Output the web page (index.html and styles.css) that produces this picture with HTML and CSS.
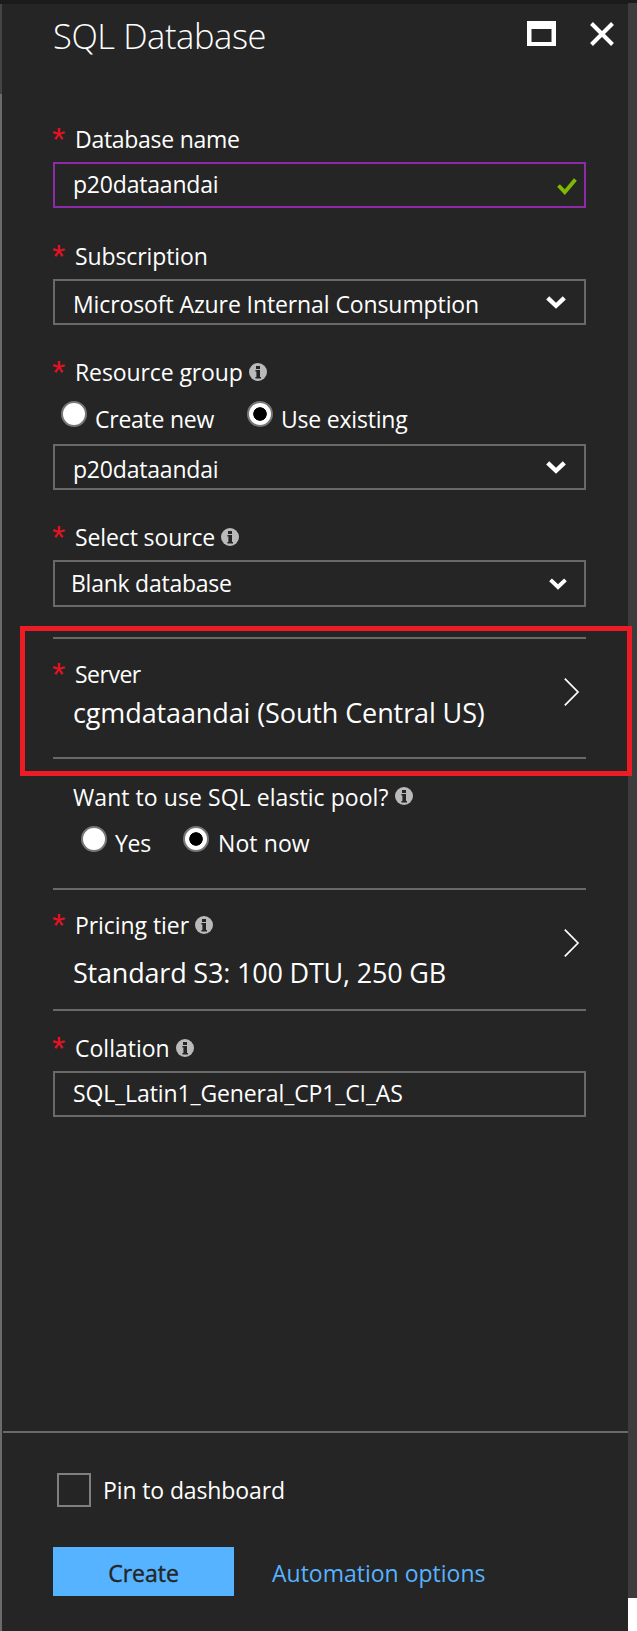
FILE: index.html
```html
<!DOCTYPE html>
<html lang="en">
<head>
<meta charset="utf-8">
<title>SQL Database</title>
<link rel="stylesheet" href="styles.css">
</head>
<body>
<svg class="defs" aria-hidden="true">
  <symbol id="info" viewBox="0 0 18 18"><circle cx="9" cy="9" r="9" fill="#bababa"/><path d="M7 3h4v3H7zM6.400 7H11v7h1v1.400H6.400V14H7.400V8.400h-1z" fill="#252525"/></symbol>
  <symbol id="down" viewBox="0 0 20 13"><path d="M1.700 1.900 10 9.800l8.300-7.900" fill="none" stroke="#fff" stroke-width="4.400"/></symbol>
  <symbol id="next" viewBox="0 0 16 28"><path d="M.8.700 14 14 .8 27.300" fill="none" stroke="#fff" stroke-width="1.700"/></symbol>
</svg>
<div class="topbar"></div>
<div class="frame">
  <div class="edge"><div class="edge-top"></div></div>
  <div class="blade">
    <header class="header">
      <h1 class="title">SQL Database</h1>
      <svg class="maximize" viewBox="0 0 29 25"><path d="M0 0h29v25H0zM4.500 8v13h20V8z" fill="#fff" fill-rule="evenodd"/></svg>
      <svg class="close" viewBox="0 0 24 24"><path d="m1.500 1.500 21 21M22.500 1.500l-21 21" stroke="#fff" stroke-width="4"/></svg>
    </header>

    <main class="form">
      <div class="label"><span class="star">*</span><span class="t-name">Database name</span></div>
      <div class="box box-active"><span class="t-value">p20dataandai</span>
        <svg class="check" viewBox="0 0 20 17"><path d="m1.500 7.500 6.300 6.600L18.400 1.500" fill="none" stroke="#7fba00" stroke-width="3.800"/></svg></div>

      <div class="label gap-wide"><span class="star">*</span><span class="t-tight">Subscription</span></div>
      <div class="box box-select"><span class="t-tight">Microsoft Azure Internal Consumption</span><svg class="down"><use href="#down"/></svg></div>

      <div class="label gap"><span class="star">*</span><span class="t-tight">Resource group</span><svg class="info"><use href="#info"/></svg></div>
      <div class="radios">
        <span class="radio"></span><span class="radio-text t-new">Create new</span>
        <span class="radio radio-on"></span><span class="radio-text t-existing">Use existing</span>
      </div>
      <div class="box box-select box-after-radios"><span class="t-value">p20dataandai</span><svg class="down"><use href="#down"/></svg></div>

      <div class="label gap"><span class="star">*</span><span class="t-source">Select source</span><svg class="info"><use href="#info"/></svg></div>
      <div class="box box-source"><span class="t-blank">Blank database</span><svg class="down down-small"><use href="#down"/></svg></div>

      <section class="picker server">
        <div class="picker-main">
          <div class="label"><span class="star">*</span><span class="t-server">Server</span></div>
          <div class="picked">cgmdataandai (South Central US)</div>
        </div>
        <svg class="next"><use href="#next"/></svg>
        <div class="highlight"></div>
      </section>

      <div class="pool">
        <div class="label"><span class="t-pool">Want to use SQL elastic pool?</span><svg class="info info-pool"><use href="#info"/></svg></div>
        <div class="radios">
          <span class="radio"></span><span class="radio-text t-yes">Yes</span>
          <span class="radio radio-on"></span><span class="radio-text t-not">Not now</span>
        </div>
      </div>

      <section class="picker tier">
        <div class="picker-main">
          <div class="label"><span class="star">*</span><span class="t-tier">Pricing tier</span><svg class="info"><use href="#info"/></svg></div>
          <div class="picked">Standard S3: 100 DTU, 250 GB</div>
        </div>
        <svg class="next"><use href="#next"/></svg>
      </section>

      <div class="label gap-collation"><span class="star">*</span><span>Collation</span><svg class="info"><use href="#info"/></svg></div>
      <div class="box box-collation"><span class="t-collation">SQL_Latin1_General_CP1_CI_AS</span></div>
    </main>

    <footer class="footer">
      <div class="pin"><span class="checkbox"></span><span class="t-pin">Pin to dashboard</span></div>
      <div class="actions"><div class="create">Create</div><a class="link">Automation options</a></div>
    </footer>
  </div>
  <div class="scroll"><div class="scroll-end"></div></div>
</div>
</body>
</html>
```
FILE: styles.css
```css
* { box-sizing: border-box; }
body {
  margin: 0;
  width: 637px;
  height: 1631px;
  display: flex;
  flex-direction: column;
  overflow: hidden;
  background: #252525;
  color: #fff;
  font: 23px/24px "Open Sans", "Noto Sans", sans-serif;
  white-space: nowrap;
}
svg { display: block; flex: none; }
.defs { display: none; }
.topbar { height: 4px; flex: none; background: #1b1b1b; }
.frame { flex: 1; display: flex; }
.edge { width: 2px; background: #6b6b6b; }
.edge-top { height: 90px; background: #444; }
.blade { width: 626px; display: flex; flex-direction: column; }
.scroll { width: 9px; margin-top: -1px; display: flex; flex-direction: column; justify-content: flex-end; background: #3c3c3e; }
.scroll-end { height: 33px; background: #fff; }

.header { display: flex; align-items: flex-start; height: 123px; padding: 8px 14px 0 51px; }
.title { margin: 0; width: 474px; font-size: 34.5px; line-height: 47px; font-weight: 300; letter-spacing: -.42px; }
.maximize { width: 29px; height: 25px; margin-top: 9px; }
.close { width: 24px; height: 24px; margin: 10px 0 0 34px; }

.form { width: 533px; margin-left: 51px; display: flex; flex-direction: column; }
.label { display: flex; height: 24px; }
.star {
  width: 22px;
  margin-left: -1px;
  margin-right: 1px;
  color: #e81123;
  font: 34px/24px "Liberation Sans", Arial, sans-serif;
}
.info { width: 18px; height: 18px; margin: 3px 0 0 6px; }
.info-pool { margin: 2px 0 0 7px; }
.gap-wide { margin-top: 36px; }
.gap { margin-top: 35px; }
.gap-collation { margin-top: 25px; }

.box {
  display: flex;
  justify-content: space-between;
  height: 46px;
  margin-top: 11px;
  padding: 8px 18px 0 18px;
  border: 2px solid #696969;
}
.box-active { border-color: #8c2ba5; padding-right: 7px; }
.box-select { padding-top: 11px; }
.box-after-radios { margin-top: 13px; }
.box-source { height: 47px; padding: 9px 17px 0 16px; }
.box-collation { padding-top: 8px; }
.check { width: 20px; height: 17px; margin-top: 6px; }
.down { width: 20px; height: 13px; margin-top: 4px; }
.down-small { width: 18px; height: 12px; margin-top: 7px; }

.radios { display: flex; height: 30px; margin-top: 17px; padding-left: 8px; }
.radio { width: 26px; height: 26px; border: 2px solid #777; border-radius: 50%; background: #fff; }
.radio-on { background: radial-gradient(circle, #000 6.400px, #fff 7.100px); }
.radio-text { margin: 6px 0 0 8px; }
.pool .radio-text { margin-top: 5px; }

.picker {
  position: relative;
  display: flex;
  justify-content: space-between;
  padding: 23px 6px 0 0;
  border: solid #696969;
  border-width: 2px 0;
}
.server { height: 122px; margin-top: 30px; }
.tier { height: 123px; margin-top: 32px; }
.picked { margin: 11px 0 0 20px; font-size: 27px; line-height: 31px; letter-spacing: -.11px; }
.tier .picked { margin-top: 20px; letter-spacing: -.19px; }
.next { width: 16px; height: 28px; margin-top: 16px; }
.highlight {
  position: absolute;
  left: -33px;
  top: -13px;
  width: 612px;
  height: 150px;
  border: 5px solid #ed1c24;
}
.pool { margin-top: 26px; padding-left: 20px; }

.footer { margin: auto 0 0 1px; height: 200px; padding: 40px 0 0 50px; border-top: 2px solid #696969; }
.pin { display: flex; align-items: center; gap: 12px; margin-left: 4px; }
.checkbox { width: 34px; height: 34px; border: 2px solid #7f7f7f; }
.actions { display: flex; margin-top: 40px; }
.create {
  width: 181px;
  height: 49px;
  padding-top: 14px;
  background: #55b3ff;
  color: #252525;
  -webkit-text-stroke: .4px #252525;
  text-align: center;
}
.link { margin: 14px 0 0 38px; color: #55b3ff; }

.t-name { letter-spacing: -.28px; }
.t-value { letter-spacing: -.2px; }
.t-source { letter-spacing: -.12px; }
.t-tight { letter-spacing: -.1px; }
.t-new { width: 152px; letter-spacing: -.25px; }
.t-existing { letter-spacing: -.2px; }
.t-blank { letter-spacing: -.25px; }
.t-server { letter-spacing: -.5px; }
.t-pool { letter-spacing: .06px; }
.t-yes { width: 68px; letter-spacing: -.3px; }
.t-not { margin-left: 9px !important; letter-spacing: .1px; }
.t-tier { letter-spacing: -.06px; }
.t-collation { letter-spacing: -.12px; }
.t-pin { letter-spacing: -.12px; }
```
